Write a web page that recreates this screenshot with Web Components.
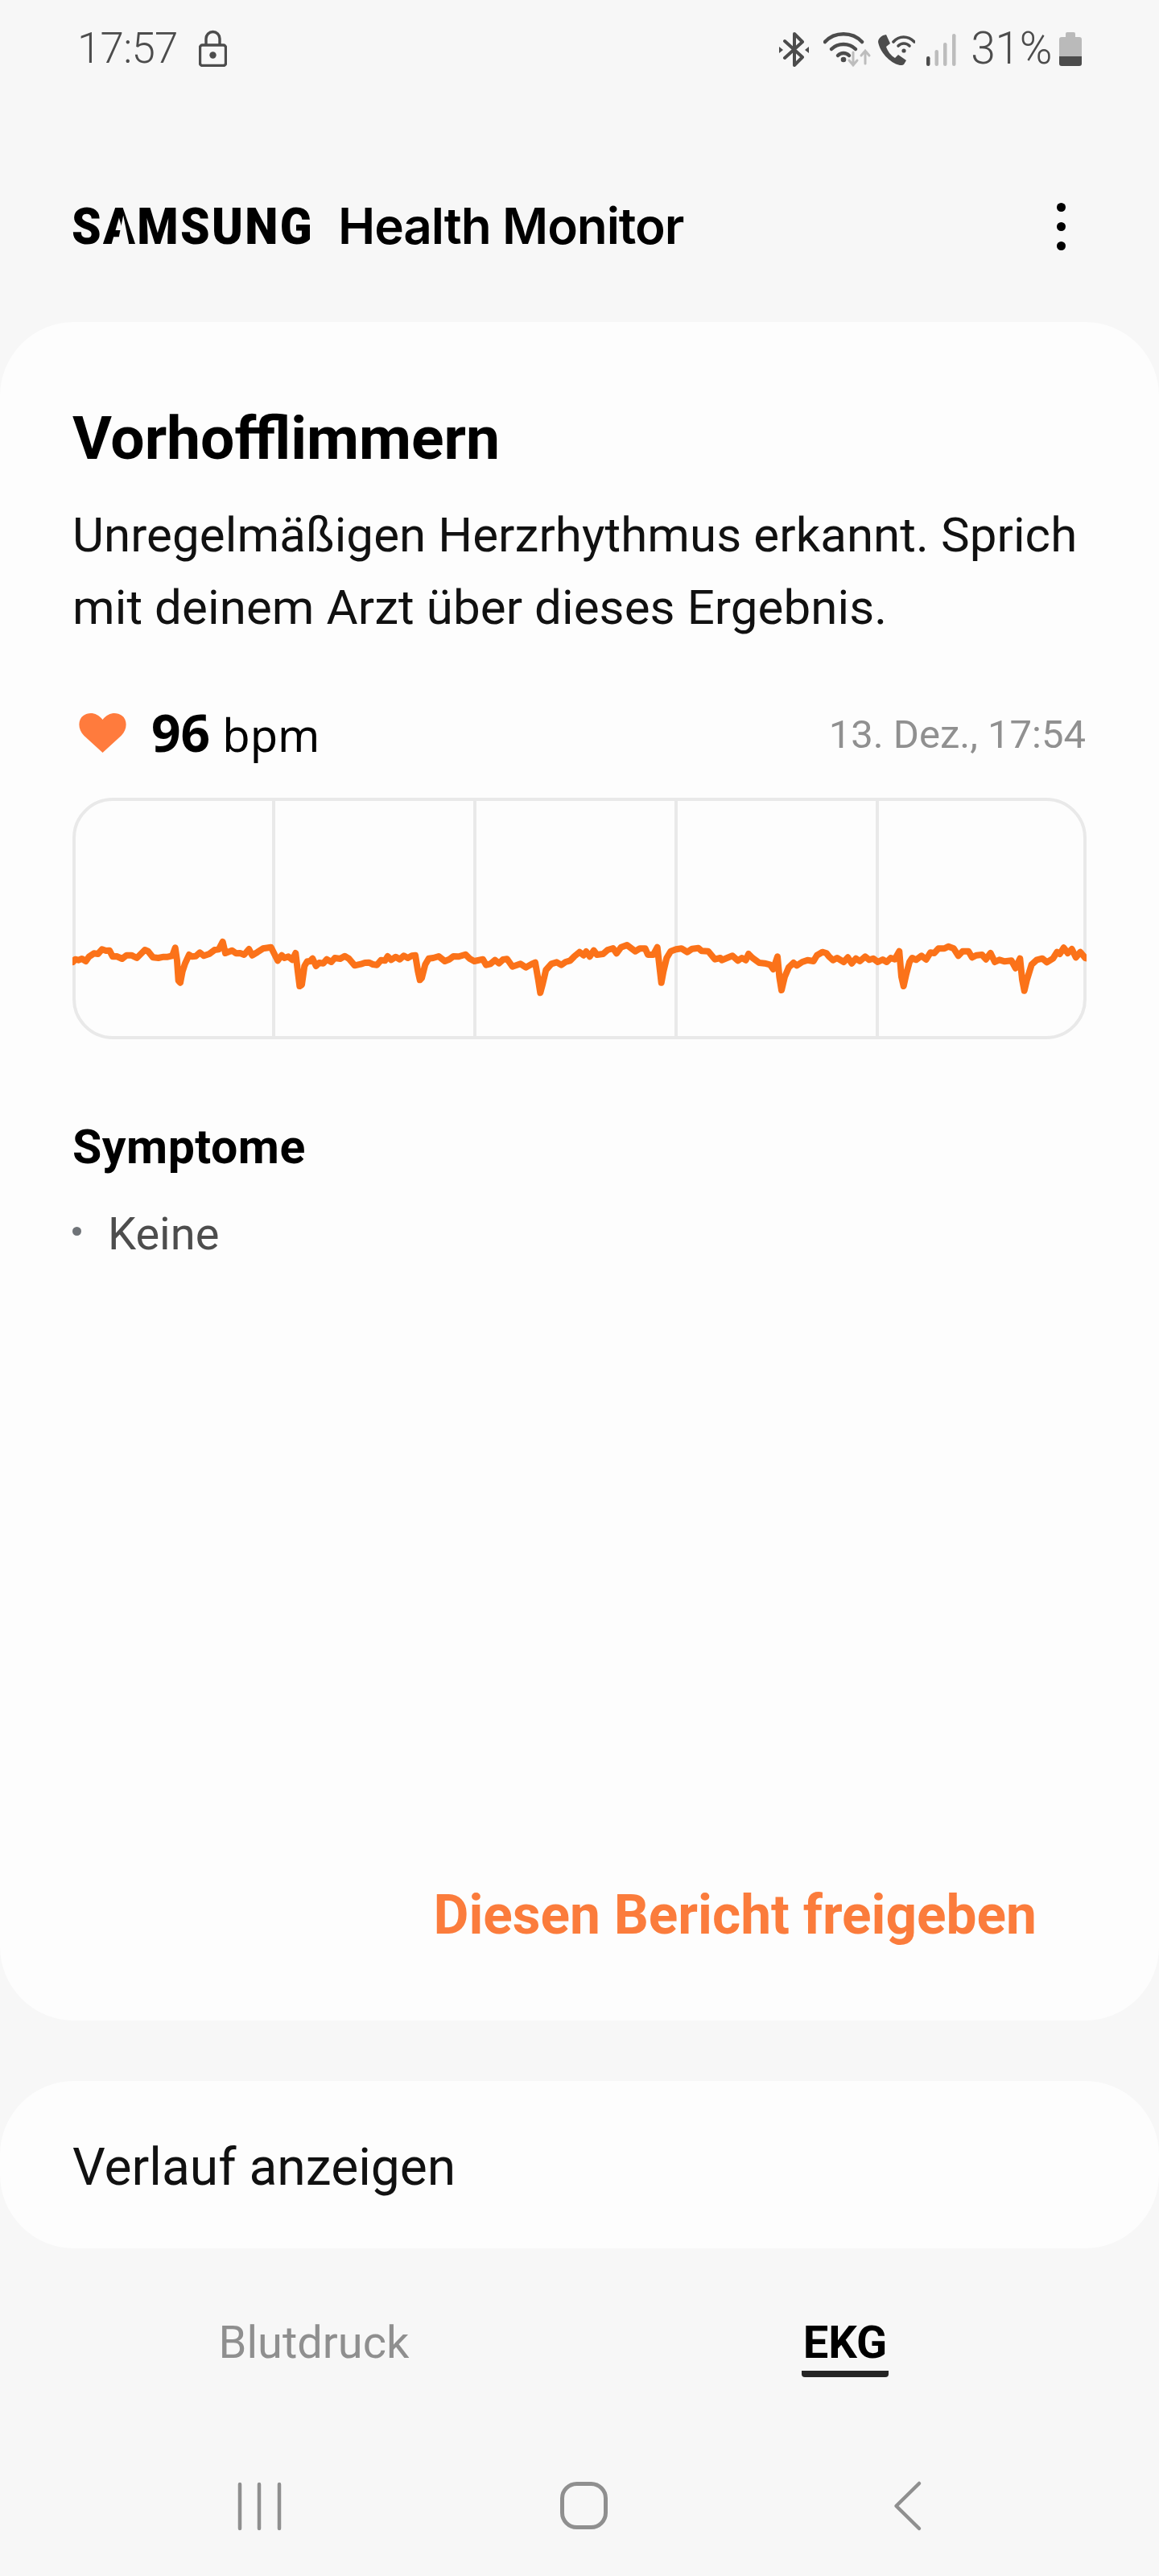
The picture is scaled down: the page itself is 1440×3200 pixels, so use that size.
<!DOCTYPE html>
<html lang="de">
<head>
<meta charset="utf-8">
<title>Samsung Health Monitor</title>
<style>
html, body { margin: 0; padding: 0; background: #f7f7f7; }
body { font-family: Roboto, "Liberation Sans", sans-serif; width: 1440px; height: 3200px; overflow: hidden; display: flex; flex-direction: column; }
</style>
</head>
<body>
<status-bar></status-bar>
<app-header></app-header>
<report-card>
  <ecg-chart slot="chart"></ecg-chart>
</report-card>
<history-row>Verlauf anzeigen</history-row>
<tab-bar></tab-bar>
<nav-bar></nav-bar>

<script>
class StatusBar extends HTMLElement {
    constructor() {
        super();
        this.shadowDOM = this.attachShadow({mode: "open"});
    }
    connectedCallback() {
        this.shadowDOM.innerHTML = `
        <style>
        :host { display: flex; flex: none; height: 120px; padding: 37px 96px 0 96px; box-sizing: border-box; justify-content: space-between; align-items: flex-start; color: #4c4c4c; font-weight: 300; font-size: 53px; line-height: 46px; }
        .side { display: flex; align-items: flex-start; }
        svg { display: block; flex: none; }
        .time { letter-spacing: -0.8px; }
        .lock { margin-left: 26px; }
        .bt { margin-right: 18px; margin-top: 3px; }
        .wifi { margin-right: 8px; margin-top: 2px; }
        .call { margin-right: 14px; margin-top: 6px; }
        .signal { margin-right: 18px; margin-top: 5px; }
        .pct { font-size: 55px; letter-spacing: -0.3px; margin-right: 9px; }
        .bat { margin-top: 3px; }
        </style>
        <div class="side">
            <span class="time">17:57</span>
            <svg class="lock" width="35" height="46" viewBox="0 0 35 46"><rect x="1.5" y="19" width="32" height="25.5" rx="3" fill="none" stroke="#4c4c4c" stroke-width="3.4"/><path d="M9 19V11a8.500 8.500 0 0 1 17 0v8" fill="none" stroke="#4c4c4c" stroke-width="3.4"/><circle cx="17.500" cy="31.500" r="4.200" fill="#4c4c4c"/></svg>
        </div>
        <div class="side">
            <svg class="bt" width="37" height="43" viewBox="0 0 37 43"><path d="M7 11l22 20-10 10V2l10 10L7 32" fill="none" stroke="#4c4c4c" stroke-width="4" stroke-linejoin="round" stroke-linecap="round"/><path d="M0 18l5 4-5 4zM37 18l-5 4 5 4z" fill="#4c4c4c"/></svg>
            <svg class="wifi" width="60" height="45" viewBox="0 0 60 45"><path d="M2 13C14 0 36 0 48 13" fill="none" stroke="#4c4c4c" stroke-width="4.500" stroke-linecap="round"/><path d="M10 22c8-8 22-8 30 0" fill="none" stroke="#4c4c4c" stroke-width="4.500" stroke-linecap="round"/><path d="M18 30c4-4 10-4 14 0" fill="none" stroke="#4c4c4c" stroke-width="4.500" stroke-linecap="round"/><circle cx="25" cy="35" r="3.300" fill="#4c4c4c"/><path d="M37 26v16m-5-6l5 6 5-6" fill="none" stroke="#bdbdbd" stroke-width="3" stroke-linecap="round"/><path d="M52 40V24m-5 6l5-6 5 6" fill="none" stroke="#bdbdbd" stroke-width="3" stroke-linecap="round"/></svg>
            <svg class="call" width="46" height="38" viewBox="0 0 46 38"><path d="M6 1l4-1 5 11-5 4c2 6 6 11 11 14l4-4 10 7-3 5c-1 1-3 1-5 1C14 35 2 21 0 9c0-3 2-6 6-8z" fill="#4c4c4c"/><path d="M19 9c7-8 18-8 26 0" fill="none" stroke="#4c4c4c" stroke-width="3.600" stroke-linecap="round"/><path d="M25 14c4-4 10-4 14 0" fill="none" stroke="#4c4c4c" stroke-width="3.600" stroke-linecap="round"/><circle cx="32" cy="20" r="2.600" fill="#4c4c4c"/></svg>
            <svg class="signal" width="37" height="40" viewBox="0 0 37 40"><rect x="0" y="28" width="4.500" height="12" rx="2.200" fill="#4c4c4c"/><rect x="10.500" y="20" width="4.500" height="20" rx="2.200" fill="#bdbdbd"/><rect x="21" y="11" width="4.500" height="29" rx="2.200" fill="#bdbdbd"/><rect x="32" y="0" width="4.500" height="40" rx="2.200" fill="#bdbdbd"/></svg>
            <span class="pct">31%</span>
            <svg class="bat" width="28" height="42" viewBox="0 0 28 42"><path d="M8 6V2a2 2 0 0 1 2-2h8a2 2 0 0 1 2 2v4h5a3 3 0 0 1 3 3v22H0V9a3 3 0 0 1 3-3z" fill="#bababa"/><path d="M0 30h28v9a3 3 0 0 1-3 3H3a3 3 0 0 1-3-3z" fill="#4c4c4c"/></svg>
        </div>`;
    }
}

class AppHeader extends HTMLElement {
    constructor() {
        super();
        this.shadowDOM = this.attachShadow({mode: "open"});
    }
    connectedCallback() {
        this.shadowDOM.innerHTML = `
        <style>
        :host { display: flex; flex: none; height: 280px; padding: 42px 116px 0 89px; box-sizing: border-box; align-items: center; justify-content: space-between; color: #000; }
        .logo { display: flex; align-items: center; gap: 35px; white-space: nowrap; }
        .samsung { position: relative; display: block; width: 296px; font: 900 63px/1 Roboto, sans-serif; letter-spacing: 2.5px; transform: scaleX(.93); transform-origin: left center; }
        /* opens the crossbar of the logo's A */
        .samsung i { position: absolute; left: 61px; top: 18px; width: 16px; height: 37px; background: #f7f7f7; clip-path: polygon(50% 0, 100% 100%, 0 100%); }
        .product { font: 600 62px/1 Inter, sans-serif; letter-spacing: -1.1px; }
        .dots { display: flex; flex-direction: column; gap: 13px; }
        .dots i { display: block; width: 11px; height: 11px; border-radius: 50%; background: #000; }
        </style>
        <div class="logo"><span class="samsung">SAMSUNG<i></i></span><span class="product">Health Monitor</span></div>
        <div class="dots"><i></i><i></i><i></i></div>`;
    }
}

class ReportCard extends HTMLElement {
    constructor() {
        super();
        this.shadowDOM = this.attachShadow({mode: "open"});
    }
    connectedCallback() {
        this.shadowDOM.innerHTML = `
        <style>
        :host { display: flex; flex: none; flex-direction: column; height: 2110px; box-sizing: border-box; background: #fdfdfd; border-radius: 92px; padding: 98px 90px 0 90px; color: #000; }
        h1 { margin: 0; font-size: 75px; line-height: 92px; font-weight: 700; }
        p { margin: 30px 0 0; font-size: 60px; line-height: 90px; color: #111; letter-spacing: .1px; }
        .reading { display: flex; justify-content: space-between; align-items: center; margin-top: 67px; height: 90px; }
        .bpm { display: flex; align-items: baseline; margin-top: -6px; font-family: "Noto Sans", sans-serif; }
        .bpm svg { align-self: center; margin: 2px 31px 0 8px; }
        .bpm b { font-size: 64px; font-weight: 700; margin-right: 15px; }
        .bpm span { font-size: 56px; }
        .date { font-size: 49px; color: #909090; padding-right: 1px; }
        .chart { margin-top: 34px; }
        h2 { margin: 99px 0 0; font-size: 59px; line-height: 70px; font-weight: 700; letter-spacing: .5px; }
        ul { list-style: none; margin: 38px 0 0; padding: 0; display: flex; align-items: center; font-size: 56px; line-height: 70px; color: #4d4d4d; }
        ul i { width: 11px; height: 11px; border-radius: 50%; background: #6f7378; margin-right: 33px; margin-top: -8px; }
        .share { margin-top: auto; margin-bottom: 89px; margin-right: 62px; text-align: right; font-size: 67.6px; line-height: 84px; font-weight: 700; color: #fb7c3c; }
        </style>
        <h1>Vorhofflimmern</h1>
        <p>Unregelmäßigen Herzrhythmus erkannt. Sprich<br>mit deinem Arzt über dieses Ergebnis.</p>
        <div class="reading">
            <div class="bpm">
                <svg width="59" height="50" viewBox="0 0 58 50"><path d="M29 50L6 29C-2 21-2 9 5 4c7-5 17-4 24 5C36 0 46-1 53 4c7 5 7 17-1 25z" fill="#ff7b3d"/></svg>
                <b>96</b><span>bpm</span>
            </div>
            <div class="date">13. Dez., 17:54</div>
        </div>
        <div class="chart"><slot name="chart"></slot></div>
        <h2>Symptome</h2>
        <ul><i></i><li>Keine</li></ul>
        <div class="share">Diesen Bericht freigeben</div>`;
    }
}

// trace read off the reference, [left edge of crop, points at 3x]
const TRACE = [
    [60, "92,705 100,695 112,698 125,693 140,702 152,685 170,673 185,675 200,658 215,663 228,662 240,685 255,684 275,693 292,680 310,680 330,690 345,675 360,660 372,665 390,688 410,690 430,686 445,686 462,682 473,652 480,700 485,775 492,782 500,740 510,710 525,678 535,685 550,683 565,670 580,682 600,675 620,660 635,658 650,630 660,672 685,662 700,673 715,672 730,678 748,657 760,680 780,668 800,655 830,650 855,700 870,680 880,690 895,685 910,697 922,672 930,740 937,795 945,790 955,720 965,703 975,703 985,692 998,720 1010,708"],
    [380, "65,710 78,695 95,705 108,690 128,693 145,683 160,692 182,718 205,713 220,708 235,707 250,714 265,716 280,698 295,700 305,684 318,697 335,686 350,695 365,682 380,690 395,682 408,680 418,740 425,772 432,765 445,715 458,692 475,690 495,684 518,702 535,695 550,684 570,685 595,677 610,692 628,702 660,695 672,716 688,712 705,698 720,710 735,696 750,694 770,722 800,712 820,725 840,714 855,707 866,770 874,820 882,790 895,735 915,712 935,706 952,716 968,705 985,700 1000,685"],
    [700, "60,668 75,680 85,666 98,685 113,662 125,678 148,675 165,660 185,654 198,673 215,650 237,642 268,665 285,655 305,655 315,678 335,678 350,650 358,720 365,782 373,740 385,690 400,665 420,658 440,655 462,668 480,656 503,653 515,664 540,665 565,695 585,690 590,698 610,690 630,682 650,700 665,690 680,698 690,675 705,690 730,708 750,710 770,715 782,732 798,685 805,760 813,810 825,760 840,725 858,708 870,718 890,705 910,698 932,702 945,680 965,668 980,672 990,685 1005,698"],
    [1040, "0,690 25,705 40,688 55,710 70,692 85,702 105,685 120,697 135,692 152,705 170,696 185,705 200,690 215,695 232,665 240,760 248,795 258,750 270,705 280,690 295,697 315,682 332,696 348,670 362,672 378,655 400,655 415,647 435,655 452,682 468,665 490,665 503,688 520,680 540,678 555,695 572,672 588,705 605,697 625,703 650,700 665,728 682,692 690,770 698,812 708,770 725,715 745,697 765,692 782,706 805,692 820,668 830,675 845,652 860,672 875,657 890,688 907,668 925,690 935,692"]
];

class EcgChart extends HTMLElement {
    constructor() {
        super();
        this.shadowDOM = this.attachShadow({mode: "open"});
    }
    connectedCallback() {
        const pts = TRACE.map(([left, s]) => s.split(" ").map(p => {
            const [x, y] = p.split(",").map(Number);
            return (left + x / 3 - 90).toFixed(1) + "," + (960 + y / 3 - 991).toFixed(1);
        }).join(" ")).join(" ");
        this.shadowDOM.innerHTML = `
        <style>
        :host { display: block; width: 1260px; height: 300px; box-sizing: border-box; border: 4px solid #e9e9e9; border-radius: 50px; position: relative; }
        .grid { display: grid; grid-template-columns: 248px 250px 250px 250px 1fr; height: 100%; }
        .grid div { border-right: 4px solid #e9e9e9; }
        .grid div:last-child { border-right: 0; }
        svg { position: absolute; left: -4px; top: -4px; }
        </style>
        <div class="grid"><div></div><div></div><div></div><div></div><div></div></div>
        <svg width="1260" height="300" viewBox="0 0 1260 300"><polyline points="${pts}" fill="none" stroke="#fb7219" stroke-width="8" stroke-linejoin="round" stroke-linecap="round"/></svg>`;
    }
}

class HistoryRow extends HTMLElement {
    constructor() {
        super();
        this.attachShadow({mode: "open"}).innerHTML = `
        <style>
        :host { display: flex; flex: none; align-items: center; height: 208px; margin-top: 75px; padding: 6px 90px 0; box-sizing: border-box; background: #fdfdfd; border-radius: 92px; font-size: 64.2px; color: #111; }
        </style>
        <slot></slot>`;
    }
}

class TabBar extends HTMLElement {
    constructor() {
        super();
        this.shadowDOM = this.attachShadow({mode: "open"});
    }
    connectedCallback() {
        this.shadowDOM.innerHTML = `
        <style>
        :host { display: grid; flex: none; grid-template-columns: 660px 660px; height: 207px; box-sizing: border-box; padding: 86px 0 0 60px; font-size: 56px; line-height: 62px; align-items: start; }
        div { justify-self: center; height: 74px; box-sizing: border-box; }
        .off { color: #8f8f8f; }
        .on { color: #000; font-weight: 700; padding: 0 2px; border-bottom: 8px solid #252525; border-radius: 0 0 4px 4px; }
        </style>
        <div class="off">Blutdruck</div>
        <div class="on">EKG</div>`;
    }
}

class NavBar extends HTMLElement {
    constructor() {
        super();
        this.shadowDOM = this.attachShadow({mode: "open"});
    }
    connectedCallback() {
        this.shadowDOM.innerHTML = `
        <style>
        :host { display: flex; flex: none; height: 200px; padding-top: 75px; box-sizing: border-box; align-items: flex-start; }
        svg { display: block; flex: none; }
        </style>
        <svg width="1440" height="80" viewBox="0 0 1440 80">
            <path d="M298 11v55M322 11v55M347 11v55" stroke="#8f8f8f" stroke-width="4.500" stroke-linecap="round" fill="none"/>
            <rect x="698.500" y="10.500" width="54" height="54" rx="18" fill="none" stroke="#8f8f8f" stroke-width="5"/>
            <path d="M1142 10l-28.500 28 28.500 28" fill="none" stroke="#8f8f8f" stroke-width="4.500" stroke-linecap="round" stroke-linejoin="round"/>
        </svg>`;
    }
}

customElements.define("status-bar", StatusBar);
customElements.define("app-header", AppHeader);
customElements.define("report-card", ReportCard);
customElements.define("ecg-chart", EcgChart);
customElements.define("history-row", HistoryRow);
customElements.define("tab-bar", TabBar);
customElements.define("nav-bar", NavBar);
</script>
</body>
</html>
